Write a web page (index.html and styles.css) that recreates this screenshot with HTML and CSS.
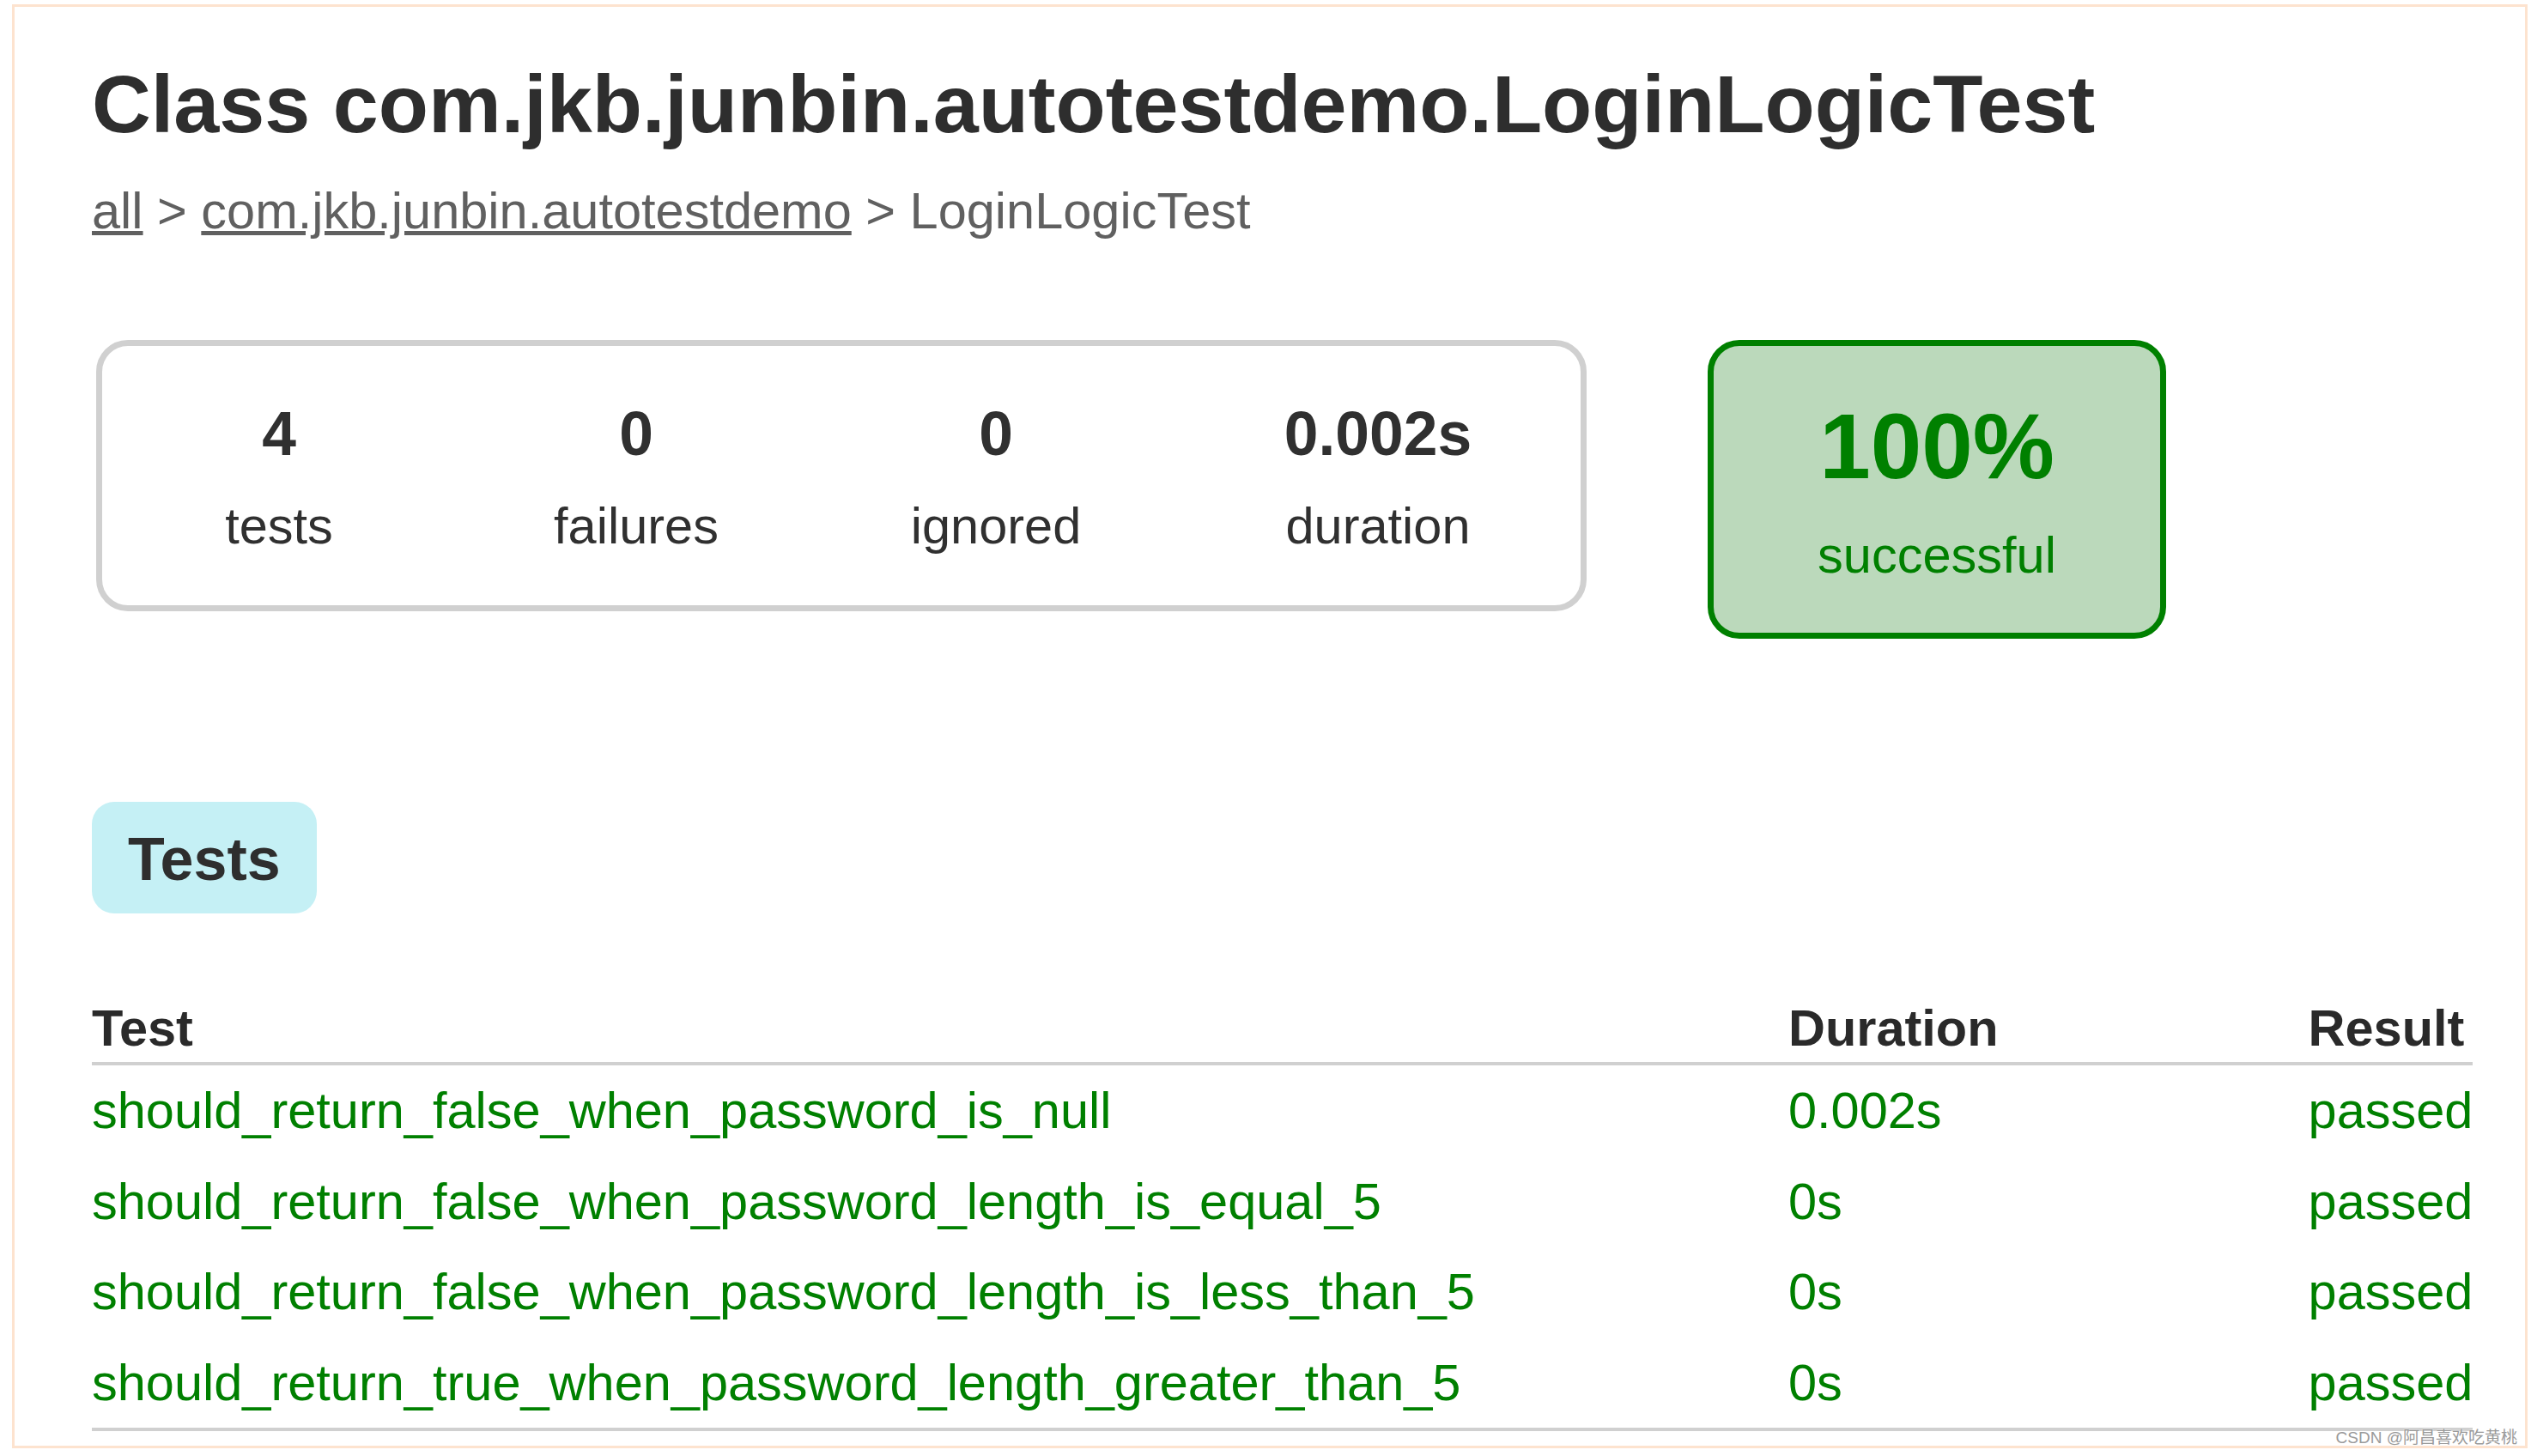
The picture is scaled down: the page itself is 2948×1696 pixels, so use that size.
FILE: index.html
```html
<!DOCTYPE html>
<html lang="en">
<head>
<meta charset="utf-8">
<title>Test results - Class com.jkb.junbin.autotestdemo.LoginLogicTest</title>
<link rel="stylesheet" href="styles.css">
</head>
<body>
<div class="frame">
  <div class="content">
    <h1 class="title">Class com.jkb.junbin.autotestdemo.LoginLogicTest</h1>
    <div class="breadcrumbs"><a href="#">all</a> &gt; <a href="#">com.jkb.junbin.autotestdemo</a> &gt; LoginLogicTest</div>

    <div class="summary">
      <div class="summary-group">
        <div class="info-box">
          <div class="counter">4</div>
          <p>tests</p>
        </div>
        <div class="info-box">
          <div class="counter">0</div>
          <p>failures</p>
        </div>
        <div class="info-box">
          <div class="counter">0</div>
          <p>ignored</p>
        </div>
        <div class="info-box">
          <div class="counter">0.002s</div>
          <p>duration</p>
        </div>
      </div>
      <div class="success-rate">
        <div class="percent">100%</div>
        <p>successful</p>
      </div>
    </div>

    <ul class="tab-links">
      <li class="selected"><h2>Tests</h2></li>
    </ul>

    <table class="tests">
      <thead>
        <tr><th>Test</th><th>Duration</th><th>Result</th></tr>
      </thead>
      <tbody>
        <tr class="success"><td>should_return_false_when_password_is_null</td><td>0.002s</td><td>passed</td></tr>
        <tr class="success"><td>should_return_false_when_password_length_is_equal_5</td><td>0s</td><td>passed</td></tr>
        <tr class="success"><td>should_return_false_when_password_length_is_less_than_5</td><td>0s</td><td>passed</td></tr>
        <tr class="success"><td>should_return_true_when_password_length_greater_than_5</td><td>0s</td><td>passed</td></tr>
      </tbody>
    </table>
  </div>
  <div class="watermark">CSDN @阿昌喜欢吃黄桃</div>
</div>
</body>
</html>
```

FILE: styles.css
```css
html, body {
  margin: 0;
  padding: 0;
  background: #ffffff;
}

body {
  width: 2948px;
  height: 1696px;
  overflow: hidden;
  font-family: "Liberation Sans", Arial, Helvetica, sans-serif;
  font-size: 59.5px;
  color: #303030;
}

.frame {
  position: relative;
  box-sizing: border-box;
  height: 1682px;
  margin: 5px 4px 0 14px;
  border: 3px solid #fde3cf;
}

.content {
  padding-left: 90px;
}

.title {
  margin: 58px 0 0 0;
  font-size: 95.3px;
  line-height: 110px;
  font-weight: bold;
  color: #2e2e2e;
}

.breadcrumbs {
  margin-top: 36px;
  line-height: 68px;
  color: #606060;
}

.breadcrumbs a {
  color: #606060;
  text-decoration: underline;
}

.summary {
  display: flex;
  align-items: flex-start;
  margin-top: 116px;
}

.summary-group {
  display: grid;
  grid-template-columns: 412px 420px 418px 472px;
  margin-left: 5px;
  border: 7px solid #d0d0d0;
  border-radius: 37px;
  text-align: center;
}

.info-box {
  padding-top: 61px;
  padding-bottom: 58px;
}

.info-box p,
.success-rate p {
  margin: 0;
  line-height: 68px;
}

.info-box .counter {
  margin-bottom: 33px;
}

.counter {
  font-size: 71.4px;
  line-height: 82px;
  font-weight: bold;
}

.success-rate {
  box-sizing: border-box;
  width: 534px;
  margin-left: 141px;
  padding: 56px 0;
  border: 7px solid #008000;
  border-radius: 37px;
  background-color: #bbd9bb;
  color: #008000;
  text-align: center;
}

.percent {
  font-size: 107px;
  line-height: 123px;
  font-weight: bold;
  margin-bottom: 31px;
}

.tab-links {
  display: flex;
  margin: 190px 0 0;
  padding: 0;
  list-style: none;
}

.tab-links li {
  box-sizing: border-box;
  height: 130px;
  padding: 25px 42px 21px 42px;
  border-radius: 26px;
  background-color: #c5f0f5;
}

.tab-links h2 {
  margin: 0;
  font-size: 70px;
  line-height: 84px;
  font-weight: bold;
  color: #2e2e2e;
}

.tests {
  margin-top: 96px;
  border-collapse: collapse;
  border-bottom: 4px solid #d0d0d0;
}

.tests th {
  text-align: left;
  white-space: nowrap;
  padding: 4px 0 5px 365px;
  line-height: 68px;
  font-weight: bold;
  color: #2a2a2a;
  border-bottom: 4px solid #d0d0d0;
}

.tests td {
  white-space: nowrap;
  padding: 19px 0 19px 365px;
  line-height: 67.5px;
}

.tests th:last-child,
.tests td:last-child {
  padding-left: 361px;
}

.tests th:first-child,
.tests td:first-child {
  padding-left: 0;
}

.success td {
  color: #008000;
}

.watermark {
  position: absolute;
  right: 9px;
  bottom: -2px;
  font-family: "Liberation Sans", "Noto Sans CJK SC", sans-serif;
  font-size: 19px;
  line-height: 22px;
  color: #9a9a9a;
  text-shadow: 0 0 2px #ffffff;
}
```
